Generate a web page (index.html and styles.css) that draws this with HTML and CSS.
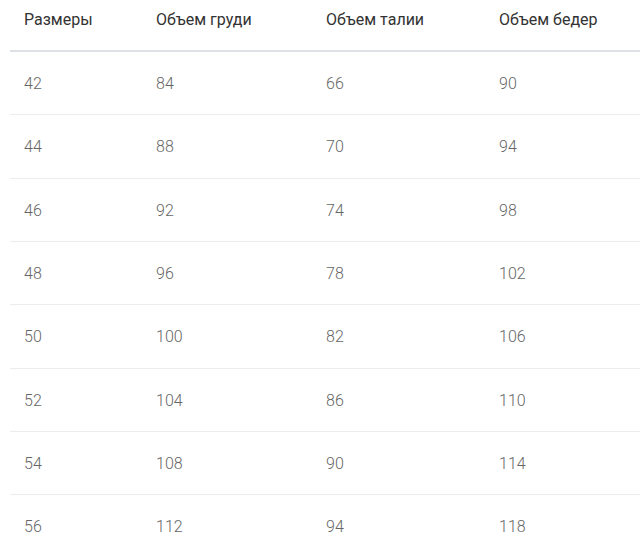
FILE: index.html
```html
<!DOCTYPE html>
<html lang="ru">
<head>
<meta charset="utf-8">
<link rel="stylesheet" href="styles.css">
</head>
<body>
<table class="sizes">
  <thead>
    <tr><th class="c1">Размеры</th><th class="c2">Объем груди</th><th class="c3">Объем талии</th><th class="c4">Объем бедер</th></tr>
  </thead>
  <tbody>
    <tr><td>42</td><td>84</td><td>66</td><td>90</td></tr>
    <tr><td>44</td><td>88</td><td>70</td><td>94</td></tr>
    <tr><td>46</td><td>92</td><td>74</td><td>98</td></tr>
    <tr><td>48</td><td>96</td><td>78</td><td>102</td></tr>
    <tr><td>50</td><td>100</td><td>82</td><td>106</td></tr>
    <tr><td>52</td><td>104</td><td>86</td><td>110</td></tr>
    <tr><td>54</td><td>108</td><td>90</td><td>114</td></tr>
    <tr><td>56</td><td>112</td><td>94</td><td>118</td></tr>
  </tbody>
</table>
</body>
</html>
```
FILE: styles.css
```css
html, body { margin: 0; padding: 0; background: #fff; }
body { padding-left: 10px; overflow: hidden; font-family: Roboto, "Liberation Sans", sans-serif; }
.sizes { border-collapse: collapse; table-layout: fixed; width: 630px; }
.sizes th, .sizes td { text-align: left; padding: 0 14px; white-space: nowrap; font-size: 16px; }
.sizes th { font-weight: 400; color: #333; padding-top: 9px; padding-bottom: 20px; line-height: 21px; border-bottom: 2px solid #dde1e6; }
.sizes td { font-weight: 300; color: #666; padding-top: 22px; padding-bottom: 20.33px; line-height: 20px; border-bottom: 1px solid #ececec; }
.c1 { width: 104px; }
.c2 { width: 142px; }
.c3 { width: 145px; }
```
